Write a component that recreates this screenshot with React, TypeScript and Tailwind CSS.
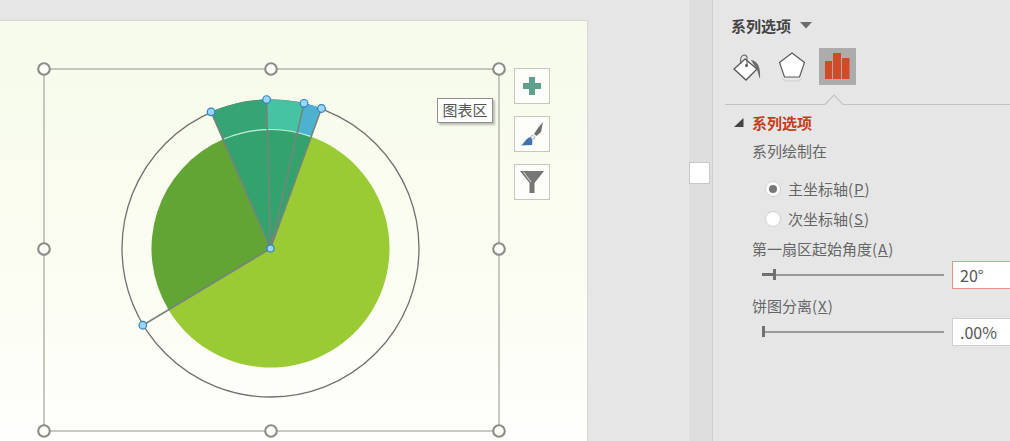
const CX = 270.5;
const CY = 227.5;

function pt(r: number, deg: number) {
  const a = (deg * Math.PI) / 180;
  return [CX + r * Math.sin(a), CY - r * Math.cos(a)];
}

function wedge(r: number, a: number, b: number) {
  const [x1, y1] = pt(r, a);
  const [x2, y2] = pt(r, b);
  const large = b - a > 180 ? 1 : 0;
  return `M${CX} ${CY}L${x1} ${y1}A${r} ${r} 0 ${large} 1 ${x2} ${y2}Z`;
}

function arc(r: number, a: number, b: number) {
  const [x1, y1] = pt(r, a);
  const [x2, y2] = pt(r, b);
  return `M${x1} ${y1}A${r} ${r} 0 0 1 ${x2} ${y2}`;
}

function ChartDrawing() {
  const spokes = [-23.5, -1.5, 13, 20, 239];
  const frame = [
    [44, 48],
    [271, 48],
    [499, 48],
    [44, 228],
    [499, 228],
    [44, 410],
    [271, 410],
    [499, 410],
  ];
  return (
    <svg width="588" height="420" viewBox="0 0 588 420" className="absolute left-0 top-0">
      <rect x="44" y="48" width="455" height="362" fill="none" stroke="#a9aba3" strokeWidth="1.3" />
      <circle cx={CX} cy={CY} r="148.5" fill="none" stroke="#707070" strokeWidth="1.3" />
      <path d={wedge(119, 20, 239)} fill="#9bcb34" />
      <path d={wedge(119, 239, 336.5)} fill="#63a534" />
      <path d={wedge(149, 336.5, 358.5)} fill="#36a474" />
      <path d={wedge(149, 358.5, 373)} fill="#45c3a2" />
      <path d={wedge(149, 13, 20)} fill="#4db2cf" />
      <path d={wedge(119, 336.5, 380)} fill="#33a26c" />
      <path d={arc(119, 337, 380)} fill="none" stroke="#c9f0dc" strokeWidth="1.2" />
      {spokes.map((s) => {
        const [x, y] = pt(149, s);
        return <line key={s} x1={CX} y1={CY} x2={x} y2={y} stroke="#75857b" strokeWidth="1.6" />;
      })}
      {spokes.map((s) => {
        const [x, y] = pt(149, s);
        return <circle key={s} cx={x} cy={y} r="3.8" fill="#9bd6f7" stroke="#2e83c4" strokeWidth="1.2" />;
      })}
      <circle cx={CX} cy={CY} r="3.5" fill="#9bd6f7" stroke="#2e83c4" strokeWidth="1.2" />
      {frame.map(([x, y]) => (
        <circle key={`${x}-${y}`} cx={x} cy={y} r="5.8" fill="#fdfef8" stroke="#8c8c88" strokeWidth="2.1" />
      ))}
    </svg>
  );
}

function ChartButton({ children }: { children: React.ReactNode }) {
  return (
    <div className="flex h-[36px] w-[36px] items-center justify-center border border-[#c6c6c2] bg-[#fdfefa]">
      {children}
    </div>
  );
}

function Key({ letter }: { letter: string }) {
  return (
    <span className="tracking-[1px]">
      (<span className="underline">{letter}</span>)
    </span>
  );
}

function Slider({ thumb, value, tone }: { thumb: number; value: string; tone: string }) {
  return (
    <div className="flex h-[28px] items-center pl-[11px]">
      <div className="relative h-[14px] w-[182px]">
        <div className="absolute left-0 right-0 top-[6px] h-[1.5px] bg-[#9a9a9a]" />
        <div className="absolute left-0 top-[5px] h-[3px] bg-[#707070]" style={{ width: thumb }} />
        <div className="absolute top-[1px] h-[11px] w-[3px] bg-[#707070]" style={{ left: thumb }} />
      </div>
      <div
        className={`ml-[8px] flex h-[28px] flex-1 items-center border bg-white pl-[7px] text-[16px] text-[#555555] ${tone}`}
      >
        {value}
      </div>
    </div>
  );
}

function Radio({ checked, label, letter }: { checked?: boolean; label: string; letter: string }) {
  return (
    <div className="flex h-[30px] items-center pl-[14px]">
      <div className="flex h-[16px] w-[16px] items-center justify-center rounded-full border border-[#cfcfcf] bg-white">
        {checked && <div className="h-[8px] w-[8px] rounded-full bg-[#777777]" />}
      </div>
      <span className="ml-[7px] text-[15px] text-[#666666]">
        {label}
        <Key letter={letter} />
      </span>
    </div>
  );
}

export default function App() {
  return (
    <div
      className="flex h-[441px] w-[1010px] overflow-hidden bg-[#e6e6e6] text-[#555555]"
      style={{ fontFamily: '"Noto Sans CJK SC", "Liberation Sans", sans-serif' }}
    >
      <div className="w-[588px] shrink-0 pt-[20px]">
        <div className="relative h-[421px] border-t border-r border-[#d6d6d3] bg-gradient-to-b from-[#f6fbea] via-[#fbfdf2] via-60% to-[#fefffc]">
          <ChartDrawing />
          <div className="absolute left-[514px] top-[47px] flex flex-col gap-[12px]">
            <ChartButton>
              <svg width="20" height="20" viewBox="0 0 20 20">
                <path d="M7 1h6v6h6v6h-6v6H7v-6H1V7h6z" fill="#5f9f8c" />
              </svg>
            </ChartButton>
            <ChartButton>
              <svg width="26" height="28" viewBox="0 0 26 28">
                <path d="M24 2 L19 8 L15 14 L17.5 16 L22 12 Z" fill="#6d6d6d" />
                <path d="M13.5 15 L16 17.5 L13.5 19.5 L11.5 17 Z" fill="#fff" stroke="#7a8fa8" strokeWidth="0.8" />
                <path d="M11 17 C13 19 14 21 13 25 L2 25.5 C5 24 6 19 11 17 Z" fill="#4072ad" />
              </svg>
            </ChartButton>
            <ChartButton>
              <svg width="26" height="26" viewBox="0 0 26 26">
                <path d="M1 2h24L15.5 14v10h-5V14z" fill="#767676" />
                <path d="M4.5 3 L12 13" stroke="#dcdcdc" strokeWidth="1" />
              </svg>
            </ChartButton>
          </div>
          <div className="absolute left-[437px] top-[77px] flex h-[25px] w-[56px] items-center justify-center border border-[#8f8f8f] bg-white text-[15px] text-[#555555] shadow-[2px_2px_2px_rgba(0,0,0,0.25)]">
            图表区
          </div>
        </div>
      </div>

      <div className="w-[101px] shrink-0" />

      <div className="relative w-[23px] shrink-0 bg-[#dedede]">
        <div className="absolute left-0 top-[162px] h-[22px] w-[21px] border border-[#c8c8c8] bg-white" />
      </div>

      <div className="min-w-0 flex-1 border-l border-[#d0d0d0] pt-[14px]">
        <div className="flex h-[22px] items-center pl-[18px]">
          <span className="text-[15px] font-bold leading-none text-[#444444]">系列选项</span>
          <svg width="12" height="8" viewBox="0 0 12 8" className="ml-[9px]">
            <path d="M0 1h12L6 7.5z" fill="#6b6b6b" />
          </svg>
        </div>

        <div className="mt-[12px] flex h-[37px] items-center pl-[20px]">
          <svg width="28" height="30" viewBox="0 0 28 30">
            <path d="M12 7 L24 17 L13 28 L1 17 Z" fill="#fff" stroke="#555" strokeWidth="1.3" />
            <path d="M8 12 C6 3 12 1 14 5 L14 13" fill="none" stroke="#666" strokeWidth="1.1" />
            <circle cx="13.5" cy="13.5" r="1.5" fill="#555" />
            <path d="M18 8 C24 9 28 14 27 27 C25 22 25 17 21 13 Z" fill="#6a6a6a" />
          </svg>
          <svg width="28" height="32" viewBox="0 0 28 32" className="ml-[17px]">
            <path d="M14 2 L26.5 11.5 L21.5 26 L6.5 26 L1.5 11.5 Z" fill="#fff" stroke="#5a5a5a" strokeWidth="1.2" />
            <path d="M4 28 L8 30 H20 L24 28" fill="none" stroke="#cfcfcf" strokeWidth="1.2" />
          </svg>
          <div className="ml-[13px] flex h-[37px] w-[37px] items-end justify-center bg-[#acacac] pb-[6px]">
            <svg width="25" height="26" viewBox="0 0 25 26">
              <path d="M0 8h7v18H0zM8 0h8v26H8zM17 5h7.5v21H17z" fill="#d24a26" />
            </svg>
          </div>
        </div>

        <svg width="298" height="20" viewBox="0 0 298 20" className="-ml-px block">
          <path d="M13 19.5H113L122 10L131 19.5H298" fill="none" stroke="#c4c4c4" strokeWidth="1.2" />
        </svg>

        <div className="mt-[5px] flex h-[24px] items-center pl-[21px]">
          <svg width="10" height="9" viewBox="0 0 10 9">
            <path d="M9.5 0v9H0z" fill="#444444" />
          </svg>
          <span className="ml-[8px] text-[15px] font-bold leading-none text-[#c43e1c]">系列选项</span>
        </div>

        <div className="pl-[39px]">
          <div className="mt-[5px] flex h-[24px] items-center text-[15px] text-[#666666]">系列绘制在</div>
          <div className="-ml-px mt-[11px]">
            <Radio checked label="主坐标轴" letter="P" />
            <Radio label="次坐标轴" letter="S" />
          </div>
          <div className="mt-[3px] flex h-[24px] items-center text-[15px] text-[#666666]">
            第一扇区起始角度
            <Key letter="A" />
          </div>
          <div className="-ml-px">
            <Slider thumb={11} value="20°" tone="border-[#e0958a] border-r-0" />
          </div>
          <div className="mt-[5px] flex h-[24px] items-center text-[15px] text-[#666666]">
            饼图分离
            <Key letter="X" />
          </div>
          <div className="-ml-px">
            <Slider thumb={0} value=".00%" tone="border-[#cfcfcf] border-r-0" />
          </div>
        </div>
      </div>
    </div>
  );
}
